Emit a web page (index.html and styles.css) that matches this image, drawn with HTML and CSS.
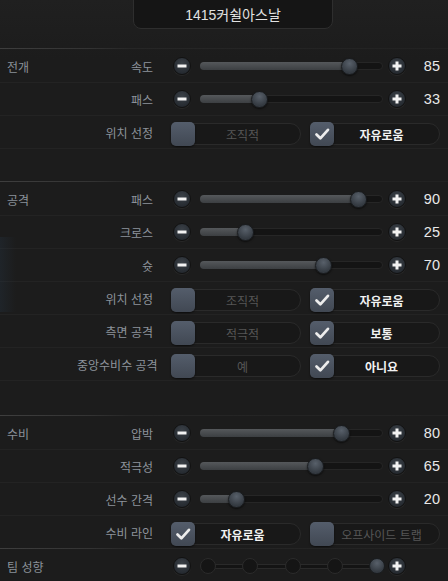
FILE: index.html
```html
<!DOCTYPE html>
<html lang="ko">
<head>
  <meta charset="UTF-8" />
  <meta name="viewport" content="width=device-width, initial-scale=1.0"/>
  <title>팀 전술</title>
  <link rel="stylesheet" href="styles.css">
</head>
<body>

<div class="screen">
  <div class="title-wrap">
    <div class="title">1415커쉴아스날</div>
  </div>

  <!-- 전개 -->
  <section class="group">
    <div class="row">
      <span class="group-name">전개</span>
      <span class="label">속도</span>
      <div class="slider">
        <span class="step minus"></span>
        <div class="track" style="--v:85"><span class="fill"></span><span class="thumb"></span></div>
        <span class="step plus"></span>
      </div>
      <span class="value">85</span>
    </div>
    <div class="row">
      <span class="group-name"></span>
      <span class="label">패스</span>
      <div class="slider">
        <span class="step minus"></span>
        <div class="track" style="--v:33"><span class="fill"></span><span class="thumb"></span></div>
        <span class="step plus"></span>
      </div>
      <span class="value">33</span>
    </div>
    <div class="row">
      <span class="group-name"></span>
      <span class="label">위치 선정</span>
      <div class="choices">
        <div class="choice"><span class="box"></span><span class="choice-text">조직적</span></div>
        <div class="choice on"><span class="box"><svg viewBox="0 0 24 24"><path d="M6 12.5l4.2 4.2L18.5 7.5"/></svg></span><span class="choice-text">자유로움</span></div>
      </div>
    </div>
    <div class="spacer"></div>
  </section>

  <!-- 공격 -->
  <section class="group attack">
    <div class="row">
      <span class="group-name">공격</span>
      <span class="label">패스</span>
      <div class="slider">
        <span class="step minus"></span>
        <div class="track" style="--v:90"><span class="fill"></span><span class="thumb"></span></div>
        <span class="step plus"></span>
      </div>
      <span class="value">90</span>
    </div>
    <div class="row">
      <span class="group-name"></span>
      <span class="label">크로스</span>
      <div class="slider">
        <span class="step minus"></span>
        <div class="track" style="--v:25"><span class="fill"></span><span class="thumb"></span></div>
        <span class="step plus"></span>
      </div>
      <span class="value">25</span>
    </div>
    <div class="row">
      <span class="group-name"></span>
      <span class="label">슛</span>
      <div class="slider">
        <span class="step minus"></span>
        <div class="track" style="--v:70"><span class="fill"></span><span class="thumb"></span></div>
        <span class="step plus"></span>
      </div>
      <span class="value">70</span>
    </div>
    <div class="row">
      <span class="group-name"></span>
      <span class="label">위치 선정</span>
      <div class="choices">
        <div class="choice"><span class="box"></span><span class="choice-text">조직적</span></div>
        <div class="choice on"><span class="box"><svg viewBox="0 0 24 24"><path d="M6 12.5l4.2 4.2L18.5 7.5"/></svg></span><span class="choice-text">자유로움</span></div>
      </div>
    </div>
    <div class="row">
      <span class="group-name"></span>
      <span class="label">측면 공격</span>
      <div class="choices">
        <div class="choice"><span class="box"></span><span class="choice-text">적극적</span></div>
        <div class="choice on"><span class="box"><svg viewBox="0 0 24 24"><path d="M6 12.5l4.2 4.2L18.5 7.5"/></svg></span><span class="choice-text">보통</span></div>
      </div>
    </div>
    <div class="row">
      <span class="group-name"></span>
      <span class="label">중앙수비수 공격</span>
      <div class="choices">
        <div class="choice"><span class="box"></span><span class="choice-text">예</span></div>
        <div class="choice on"><span class="box"><svg viewBox="0 0 24 24"><path d="M6 12.5l4.2 4.2L18.5 7.5"/></svg></span><span class="choice-text">아니요</span></div>
      </div>
    </div>
    <div class="spacer tall"></div>
  </section>

  <!-- 수비 -->
  <section class="group">
    <div class="row">
      <span class="group-name">수비</span>
      <span class="label">압박</span>
      <div class="slider">
        <span class="step minus"></span>
        <div class="track" style="--v:80"><span class="fill"></span><span class="thumb"></span></div>
        <span class="step plus"></span>
      </div>
      <span class="value">80</span>
    </div>
    <div class="row">
      <span class="group-name"></span>
      <span class="label">적극성</span>
      <div class="slider">
        <span class="step minus"></span>
        <div class="track" style="--v:65"><span class="fill"></span><span class="thumb"></span></div>
        <span class="step plus"></span>
      </div>
      <span class="value">65</span>
    </div>
    <div class="row">
      <span class="group-name"></span>
      <span class="label">선수 간격</span>
      <div class="slider">
        <span class="step minus"></span>
        <div class="track" style="--v:20"><span class="fill"></span><span class="thumb"></span></div>
        <span class="step plus"></span>
      </div>
      <span class="value">20</span>
    </div>
    <div class="row">
      <span class="group-name"></span>
      <span class="label">수비 라인</span>
      <div class="choices">
        <div class="choice on"><span class="box"><svg viewBox="0 0 24 24"><path d="M6 12.5l4.2 4.2L18.5 7.5"/></svg></span><span class="choice-text">자유로움</span></div>
        <div class="choice"><span class="box"></span><span class="choice-text">오프사이드 트랩</span></div>
      </div>
    </div>
  </section>

  <!-- 팀 성향 -->
  <section class="group">
    <div class="row">
      <span class="group-name wide">팀 성향</span>
      <div class="slider">
        <span class="step minus"></span>
        <div class="notches">
          <span class="notch"></span>
          <span class="notch"></span>
          <span class="notch"></span>
          <span class="notch"></span>
          <span class="notch active"></span>
        </div>
        <span class="step plus"></span>
      </div>
    </div>
  </section>
</div>

</body>
</html>
```

FILE: styles.css
```css
body {
  margin: 0;
  background: #1c1c1c;
  font-family: "Noto Sans CJK KR", "Liberation Sans", sans-serif;
  color: #8d939b;
}
.screen {
  width: 448px;
  height: 581px;
  overflow: hidden;
  background: linear-gradient(#202020, #1c1c1c 60px);
}
.title-wrap {
  height: 48px;
  display: flex;
  justify-content: center;
}
.title {
  width: 200px;
  height: 30px;
  margin-top: -1px;
  margin-left: 18px;
  box-sizing: border-box;
  background: #151515;
  border: 1px solid #2e2e2e;
  border-radius: 0 0 8px 8px;
  color: #e2e2e2;
  font-family: "Liberation Sans", "Noto Sans CJK KR", sans-serif;
  font-size: 14px;
  display: flex;
  align-items: center;
  justify-content: center;
}

.group {
  position: relative;
  border-top: 1px solid #141414;
}
.group::before {
  content: "";
  position: absolute;
  left: 0;
  top: -1px;
  width: 100%;
  height: 1px;
  background: linear-gradient(90deg, #3e3e3e, #333 90px, #262626 130px, #222);
}
.attack::after {
  content: "";
  position: absolute;
  left: 0;
  top: 55px;
  width: 16px;
  height: 75px;
  background: linear-gradient(90deg, rgba(40, 60, 80, 0.25), rgba(40, 60, 80, 0));
}

.row {
  height: 32px;
  padding-left: 7px;
  display: flex;
  align-items: center;
  border-bottom: 1px solid #232323;
  font-size: 12px;
  position: relative;
  top: 1px;
}
.spacer { height: 33px; }
.spacer.tall { height: 35px; }

.group-name {
  width: 70px;
  color: #8a9199;
}
.group-name.wide {
  width: 146px;
}
.label {
  width: 76px;
  text-align: right;
  color: #8d939b;
  white-space: nowrap;
}

.slider {
  margin-left: 20px;
  width: 233px;
  display: flex;
  align-items: center;
}
.step {
  width: 18px;
  height: 18px;
  border-radius: 50%;
  box-sizing: border-box;
  border: 1px solid #121212;
  background: radial-gradient(circle at 50% 35%, #3b4148, #252a30 75%);
  box-shadow: 0 1px 1px rgba(255,255,255,0.06);
  position: relative;
  flex: none;
}
.step::before,
.step::after {
  content: "";
  position: absolute;
  background: #f2f2f2;
  left: 50%;
  top: 50%;
  transform: translate(-50%, -50%);
}
.step::before { width: 9px; height: 3px; }
.plus::after { width: 3px; height: 9px; }
.minus::after { display: none; }

.track {
  position: relative;
  width: 183px;
  height: 8px;
  margin: 0 5px 0 9px;
  box-sizing: border-box;
  border: 1px solid #262626;
  border-radius: 4px;
  background: #141414;
}
.fill {
  position: absolute;
  left: -1px;
  top: -1px;
  height: 8px;
  width: calc(2px + var(--v) * 1.74px);
  border-radius: 4px 0 0 4px;
  background: linear-gradient(#55585b, #3c3f42);
}
.thumb {
  position: absolute;
  top: 50%;
  left: calc(var(--v) * 1.74px - 7.5px);
  width: 17px;
  height: 17px;
  margin-top: -8.5px;
  border-radius: 50%;
  box-sizing: border-box;
  border: 1px solid #1a1d20;
  background: radial-gradient(circle at 50% 30%, #58606a, #343a41 70%);
  box-shadow: 0 1px 2px rgba(0,0,0,0.6);
}
.value {
  width: 34px;
  text-align: right;
  color: #e8e8e8;
  font-family: "Liberation Sans", sans-serif;
  font-size: 14.5px;
}

.choices {
  margin-left: 18px;
  display: flex;
  gap: 9px;
}
.choice {
  width: 130px;
  height: 22px;
  box-sizing: border-box;
  border: 1px solid #2a2a2a;
  border-radius: 11px;
  background: #181818;
  display: flex;
  align-items: center;
  position: relative;
  top: 2px;
}
.box {
  width: 24px;
  height: 24px;
  margin-left: -1px;
  border-radius: 5px;
  background: linear-gradient(#545d6b, #414853);
  box-shadow: 0 1px 2px rgba(0,0,0,0.6);
  display: flex;
  align-items: center;
  justify-content: center;
  flex: none;
}
.box svg {
  width: 22px;
  height: 22px;
}
.box path {
  fill: none;
  stroke: #ececec;
  stroke-width: 3;
  stroke-linecap: round;
  stroke-linejoin: round;
}
.choice-text {
  flex: 1;
  text-align: center;
  padding-right: 10px;
  color: #565656;
  white-space: nowrap;
}
.choice.on .choice-text {
  color: #f2f2f2;
  font-weight: bold;
}

.notches {
  width: 185px;
  margin: 0 3px 0 9px;
  display: flex;
  justify-content: space-between;
  align-items: center;
  position: relative;
}
.notches::before {
  content: "";
  position: absolute;
  left: 8px;
  right: 8px;
  top: 50%;
  height: 3px;
  margin-top: -2px;
  border-top: 1px solid #2a2a2a;
  border-bottom: 1px solid #2a2a2a;
  background: #141414;
}
.notch {
  position: relative;
  width: 16px;
  height: 16px;
  box-sizing: border-box;
  border-radius: 50%;
  border: 1px solid #2b2b2b;
  background: #151515;
}
.notch.active {
  border-color: #1a1d20;
  background: radial-gradient(circle at 50% 30%, #58606a, #343a41 70%);
}
```
